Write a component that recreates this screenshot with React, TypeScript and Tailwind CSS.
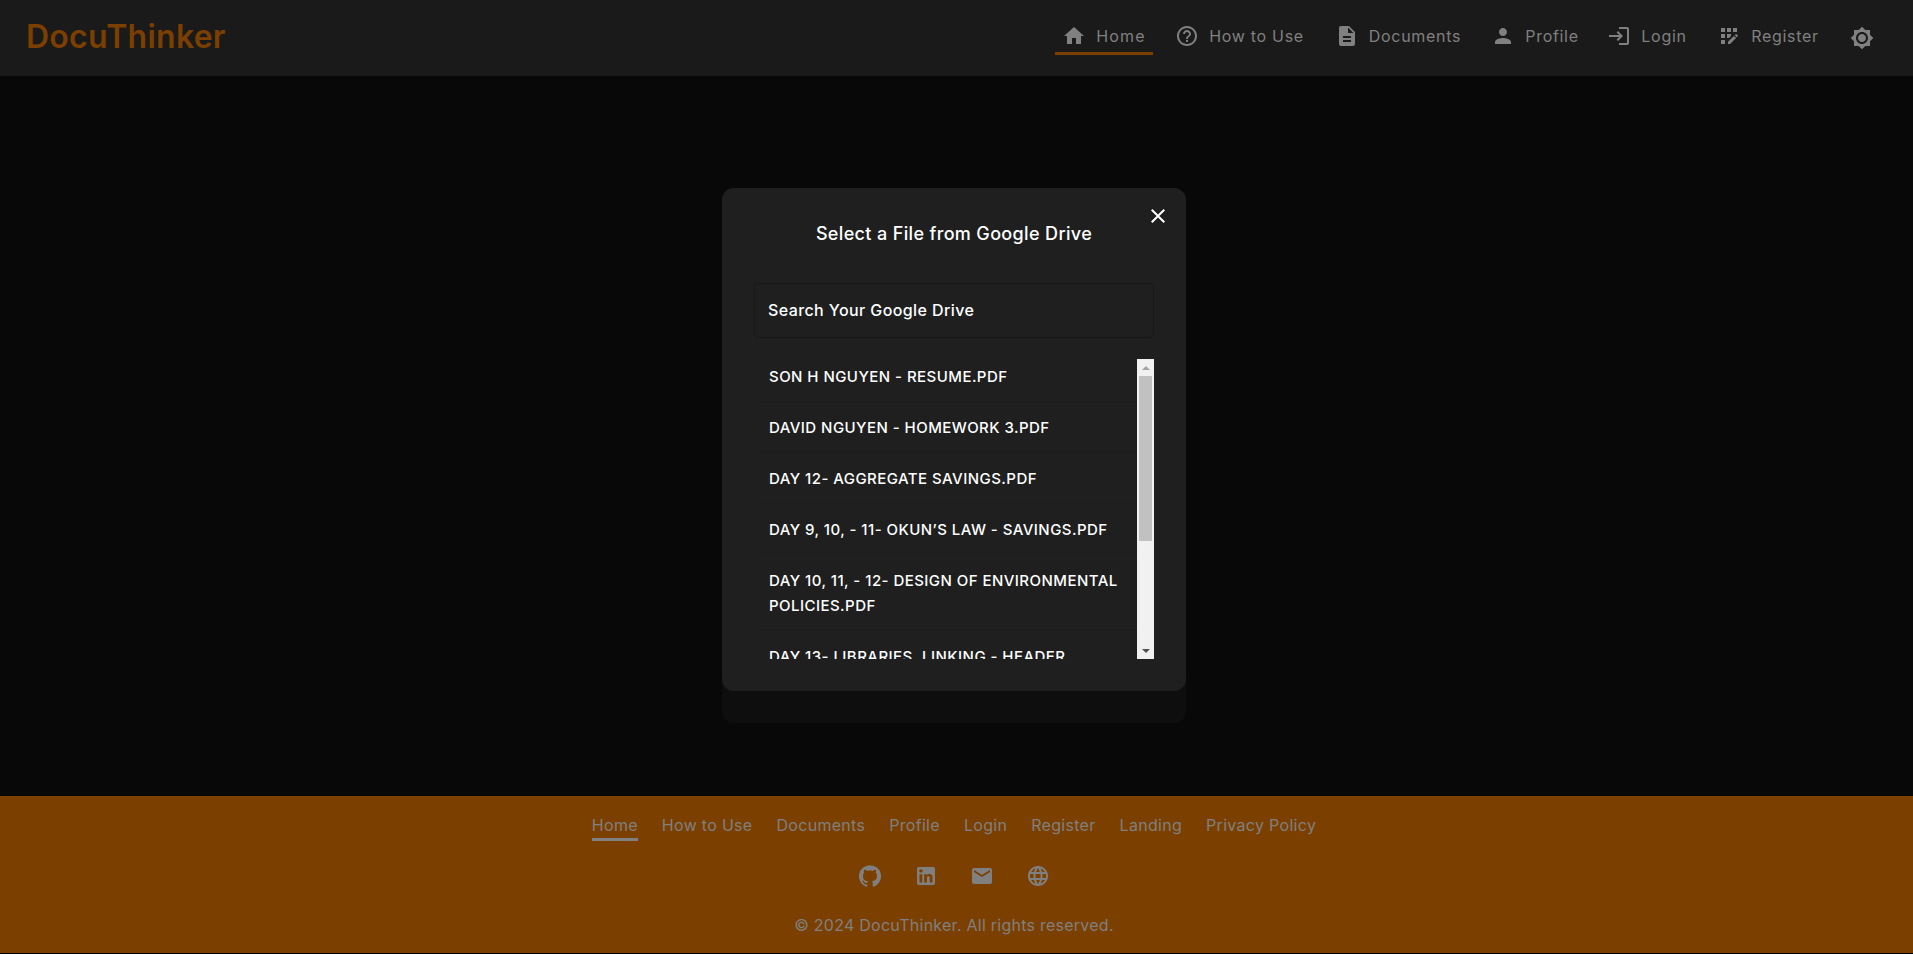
import type { ReactNode } from "react";

const ICONS = {
  home: "M10 20v-6h4v6h5v-8h3L12 3 2 12h3v8z",
  help: "M11 18h2v-2h-2v2zm1-16C6.48 2 2 6.48 2 12s4.48 10 10 10 10-4.48 10-10S17.52 2 12 2zm0 18c-4.41 0-8-3.59-8-8s3.59-8 8-8 8 3.59 8 8-3.59 8-8 8zm0-14c-2.21 0-4 1.79-4 4h2c0-1.1.9-2 2-2s2 .9 2 2c0 2-3 1.75-3 5h2c0-2.25 3-2.5 3-5 0-2.21-1.79-4-4-4z",
  doc: "M14 2H6c-1.1 0-1.99.9-1.99 2L4 20c0 1.1.89 2 1.99 2H18c1.1 0 2-.9 2-2V8l-6-6zm2 16H8v-2h8v2zm0-4H8v-2h8v2zm-3-5V3.5L18.5 9H13z",
  person: "M12 12c2.21 0 4-1.79 4-4s-1.79-4-4-4-4 1.79-4 4 1.79 4 4 4zm0 2c-2.67 0-8 1.34-8 4v2h16v-2c0-2.66-5.33-4-8-4z",
  login: "M11 7 9.6 8.4l2.6 2.6H2v2h10.2l-2.6 2.6L11 17l5-5-5-5zm9 12h-8v2h8c1.1 0 2-.9 2-2V5c0-1.1-.9-2-2-2h-8v2h8v14z",
  register: "M10 4h4v4h-4zM4 16h4v4H4zM4 10h4v4H4zM4 4h4v4H4zM16 4h4v4h-4zM11 17.86V20h2.1l5.98-5.97-2.12-2.12zM14 12.03V10h-4v4h2.03zM20.85 11.56l-1.41-1.41c-.2-.2-.51-.2-.71 0l-1.06 1.06 2.12 2.12 1.06-1.06c.2-.2.2-.51 0-.71z",
  theme: "M20 8.69V4h-4.69L12 .69 8.69 4H4v4.69L.69 12 4 15.31V20h4.69L12 23.31 15.31 20H20v-4.69L23.31 12 20 8.69zM12 18c-3.31 0-6-2.69-6-6s2.69-6 6-6 6 2.69 6 6-2.69 6-6 6zm0-10c-2.21 0-4 1.79-4 4s1.79 4 4 4 4-1.79 4-4-1.79-4-4-4z",
  close: "M19 6.41 17.59 5 12 10.59 6.41 5 5 6.41 10.59 12 5 17.59 6.41 19 12 13.41 17.59 19 19 17.59 13.41 12z",
  github: "M12 1.27a11 11 0 00-3.48 21.46c.55.09.73-.28.73-.55v-1.84c-3.03.64-3.67-1.46-3.67-1.46-.55-1.29-1.28-1.65-1.28-1.65-.92-.65.1-.65.1-.65 1.1 0 1.73 1.1 1.73 1.1.92 1.65 2.57 1.2 3.21.92a2 2 0 01.64-1.47c-2.47-.27-5.04-1.19-5.04-5.5 0-1.1.46-2.1 1.2-2.84a3.76 3.76 0 010-2.93s.91-.28 3.11 1.1c1.8-.49 3.7-.49 5.5 0 2.1-1.38 3.02-1.1 3.02-1.1a3.76 3.76 0 010 2.93c.83.74 1.2 1.74 1.2 2.94 0 4.21-2.57 5.13-5.04 5.4.45.37.82.92.82 2.02v3.03c0 .27.1.64.73.55A11 11 0 0012 1.27",
  linkedin: "M19 3a2 2 0 0 1 2 2v14a2 2 0 0 1-2 2H5a2 2 0 0 1-2-2V5a2 2 0 0 1 2-2h14m-.5 15.5v-5.3a3.26 3.26 0 0 0-3.26-3.26c-.85 0-1.84.52-2.32 1.3v-1.11h-2.79v8.37h2.79v-4.93c0-.77.62-1.4 1.39-1.4a1.4 1.4 0 0 1 1.4 1.4v4.93h2.79M6.88 8.56a1.68 1.68 0 0 0 1.68-1.68c0-.93-.75-1.69-1.68-1.69a1.69 1.69 0 0 0-1.69 1.69c0 .93.76 1.68 1.69 1.68m1.39 9.94v-8.37H5.5v8.37h2.77z",
  email: "M20 4H4c-1.1 0-1.99.9-1.99 2L2 18c0 1.1.9 2 2 2h16c1.1 0 2-.9 2-2V6c0-1.1-.9-2-2-2zm0 4-8 5-8-5V6l8 5 8-5v2z",
  globe: "M11.99 2C6.47 2 2 6.48 2 12s4.47 10 9.99 10C17.52 22 22 17.52 22 12S17.52 2 11.99 2zm6.93 6h-2.95c-.32-1.25-.78-2.45-1.38-3.56 1.84.63 3.37 1.91 4.33 3.56zM12 4.04c.83 1.2 1.48 2.53 1.91 3.96h-3.82c.43-1.43 1.08-2.76 1.91-3.96zM4.26 14C4.1 13.36 4 12.69 4 12s.1-1.36.26-2h3.38c-.08.66-.14 1.32-.14 2 0 .68.06 1.34.14 2H4.26zm.82 2h2.95c.32 1.25.78 2.45 1.38 3.56-1.84-.63-3.37-1.9-4.33-3.56zm2.95-8H5.08c.96-1.66 2.49-2.93 4.33-3.56C8.81 5.55 8.35 6.75 8.03 8zM12 19.96c-.83-1.2-1.48-2.53-1.91-3.96h3.82c-.43 1.43-1.08 2.76-1.91 3.96zM14.34 14H9.66c-.09-.66-.16-1.32-.16-2 0-.68.07-1.35.16-2h4.68c.09.65.16 1.32.16 2 0 .68-.07 1.34-.16 2zm.25 5.56c.6-1.11 1.06-2.31 1.38-3.56h2.95c-.96 1.65-2.49 2.93-4.33 3.56zM16.36 14c.08-.66.14-1.32.14-2 0-.68-.06-1.34-.14-2h3.38c.16.64.26 1.31.26 2s-.1 1.36-.26 2h-3.38z",
};

function Icon({ name, className }: { name: keyof typeof ICONS; className?: string }) {
  return (
    <svg viewBox="0 0 24 24" fill="currentColor" aria-hidden="true" className={className}>
      <path d={ICONS[name]} />
    </svg>
  );
}

const NAV_ITEMS = [
  { label: "Home", icon: "home", width: "w-[98px]", active: true },
  { label: "How to Use", icon: "help", width: "w-[141px]", active: false },
  { label: "Documents", icon: "doc", width: "w-[144px]", active: false },
  { label: "Profile", icon: "person", width: "w-[98px]", active: false },
  { label: "Login", icon: "login", width: "w-[94px]", active: false },
  { label: "Register", icon: "register", width: "w-[116px]", active: false },
] as const;

const FOOTER_LINKS = ["How to Use", "Documents", "Profile", "Login", "Register", "Landing", "Privacy Policy"];

const FILES = [
  "SON H NGUYEN - RESUME.PDF",
  "DAVID NGUYEN - HOMEWORK 3.PDF",
  "DAY 12- AGGREGATE SAVINGS.PDF",
  "DAY 9, 10, - 11- OKUN’S LAW - SAVINGS.PDF",
  "DAY 10, 11, - 12- DESIGN OF ENVIRONMENTAL POLICIES.PDF",
  "DAY 13- LIBRARIES, LINKING - HEADER FILES.PDF",
];

function Header() {
  return (
    <header className="flex h-[76px] items-center justify-between bg-[#1a1a1a] pl-[26px] pr-[39px]">
      <div className="pb-[3px] text-[32px] font-semibold tracking-[0.25px] text-[#7b3f00]">DocuThinker</div>
      <nav className="mb-1 flex items-center gap-4 text-[16px] tracking-[0.7px] text-[#808080]">
        {NAV_ITEMS.map((item) => (
          <NavLink key={item.label} {...item} />
        ))}
        <Icon name="theme" className="ml-2 mt-[3px] size-6" />
      </nav>
    </header>
  );
}

function NavLink({ label, icon, width, active }: (typeof NAV_ITEMS)[number]) {
  return (
    <a
      className={`flex h-[38px] items-center justify-center gap-[10px] whitespace-nowrap border-b-[3px] pt-[3px] ${width} ${
        active ? "border-[#7b3f00]" : "border-transparent"
      }`}
    >
      <Icon name={icon} className="size-6 shrink-0" />
      <span className={active ? "pb-px tracking-[1.2px]" : ""}>{label}</span>
    </a>
  );
}

function ScrollBar() {
  return (
    <div className="flex h-full w-[17px] shrink-0 flex-col items-center bg-[#f1f1f1]">
      <div className="flex h-[17px] w-full shrink-0 items-center justify-center">
        <div className="h-0 w-0 border-x-[4px] border-b-[4px] border-x-transparent border-b-[#a3a3a3]" />
      </div>
      <div className="h-[165px] w-[13px] shrink-0 bg-[#c1c1c1]" />
      <div className="flex-1" />
      <div className="flex h-[17px] w-full shrink-0 items-center justify-center">
        <div className="h-0 w-0 border-x-[4px] border-t-[4px] border-x-transparent border-t-[#505050]" />
      </div>
    </div>
  );
}

function FileDialog() {
  return (
    <div className="h-[535px] w-[464px] rounded-xl bg-[#0e0e0e]">
      <div className="relative h-[503px] rounded-xl bg-[#1f1f1f] px-8 pt-8 text-white">
        <button type="button" className="absolute right-4 top-4">
          <Icon name="close" className="size-6" />
        </button>
        <h2 className="pt-px text-center text-[18px] font-medium leading-[26px] tracking-[0.35px]">
          Select a File from Google Drive
        </h2>
        <div className="mt-[36px] flex h-[55px] items-center rounded border border-[#181818] pb-[2px] pl-[13px] text-[16px] font-medium tracking-[0.4px]">
          Search Your Google Drive
        </div>
        <div className="mt-[21px] flex h-[300px]">
          <div className="flex-1 overflow-hidden">
            <ul className="-mt-2">
              {FILES.map((file) => (
                <li
                  key={file}
                  className="border-b border-[#1d1d1d] pb-3 pl-[15px] pr-[15px] pt-[13px] text-[15px] font-medium leading-[25px] tracking-[0.45px]"
                >
                  {file}
                </li>
              ))}
            </ul>
          </div>
          <ScrollBar />
        </div>
      </div>
    </div>
  );
}

function Footer({ children }: { children?: ReactNode }) {
  return (
    <footer className="mb-px flex h-[157px] flex-col items-center bg-[#7b3f00] pr-[5px] text-[#808080]">
      <div className="mt-[17px] flex gap-6 text-[16px] leading-6 tracking-[0.3px]">
        <a className="border-b-[3px] border-[#808080] pb-[1px]">Home</a>
        {FOOTER_LINKS.map((link) => (
          <a key={link}>{link}</a>
        ))}
      </div>
      <div className="mt-[23px] flex gap-8">
        <Icon name="github" className="size-6" />
        <Icon name="linkedin" className="size-6" />
        <Icon name="email" className="size-6" />
        <Icon name="globe" className="size-6" />
      </div>
      {children}
    </footer>
  );
}

export default function App() {
  return (
    <div className="flex h-[954px] flex-col bg-black font-['Inter',sans-serif]">
      <Header />
      <main className="flex flex-1 items-start justify-center bg-[#080808] pr-[5px] pt-[112px]">
        <FileDialog />
      </main>
      <Footer>
        <p className="mt-[25px] text-[16px] leading-6 tracking-[0.25px]">© 2024 DocuThinker. All rights reserved.</p>
      </Footer>
    </div>
  );
}
